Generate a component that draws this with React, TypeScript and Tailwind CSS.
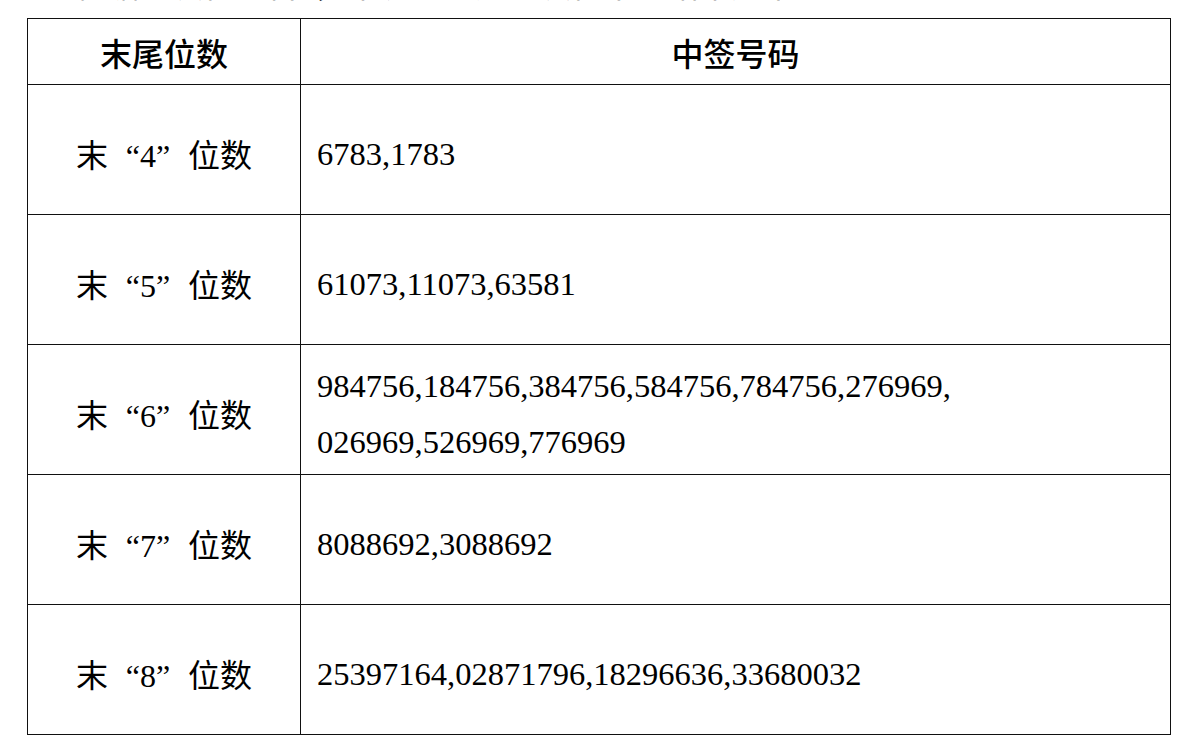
const serif = "font-['Liberation_Serif','Noto_Sans_CJK_SC',serif]";
const hei = "font-['Noto_Sans_CJK_SC','Liberation_Sans',sans-serif]";

const rows: { digits: string; lines: string[] }[] = [
  { digits: "4", lines: ["6783,1783"] },
  { digits: "5", lines: ["61073,11073,63581"] },
  {
    digits: "6",
    lines: ["984756,184756,384756,584756,784756,276969,", "026969,526969,776969"],
  },
  { digits: "7", lines: ["8088692,3088692"] },
  { digits: "8", lines: ["25397164,02871796,18296636,33680032"] },
];

function TailLabel({ digits }: { digits: string }) {
  return (
    <span className="inline-flex items-baseline">
      <span className="w-8">末</span>
      <span className="w-8 text-right font-['Liberation_Serif',serif]">“</span>
      <span className="font-['Liberation_Serif',serif]">{digits}</span>
      <span className="w-8 text-left font-['Liberation_Serif',serif]">”</span>
      <span>位数</span>
    </span>
  );
}

export default function App() {
  return (
    <div className={`w-[1202px] h-[750px] bg-white text-black overflow-hidden ${serif}`}>
      {/* bottom edge of the previous paragraph, cut by the page */}
      <div className="h-[3px] overflow-hidden pl-[75px]">
        <p className="text-[32px] leading-[40px] -mt-[34px] whitespace-nowrap">
          根据《发行公告》，本次网上定价发行中签结果如下：
        </p>
      </div>

      <table className="ml-[27px] mt-[15px] w-[1144px] border-collapse table-fixed">
        <colgroup>
          <col className="w-[273px]" />
          <col />
        </colgroup>
        <thead>
          <tr className="h-[66px]">
            <th className={`border border-[#111] text-[32px] font-medium leading-none ${hei}`}>
              末尾位数
            </th>
            <th className={`border border-[#111] text-[32px] font-medium leading-none ${hei}`}>
              中签号码
            </th>
          </tr>
        </thead>
        <tbody>
          {rows.map((r) => (
            <tr key={r.digits} className="h-[130px]">
              <td className="border border-[#111] text-center text-[32px] pt-3">
                <TailLabel digits={r.digits} />
              </td>
              <td className="border border-[#111] pl-4 text-[32.5px] leading-[56px] pt-2">
                {r.lines.map((l) => (
                  <div key={l}>{l}</div>
                ))}
              </td>
            </tr>
          ))}
        </tbody>
      </table>
    </div>
  );
}
